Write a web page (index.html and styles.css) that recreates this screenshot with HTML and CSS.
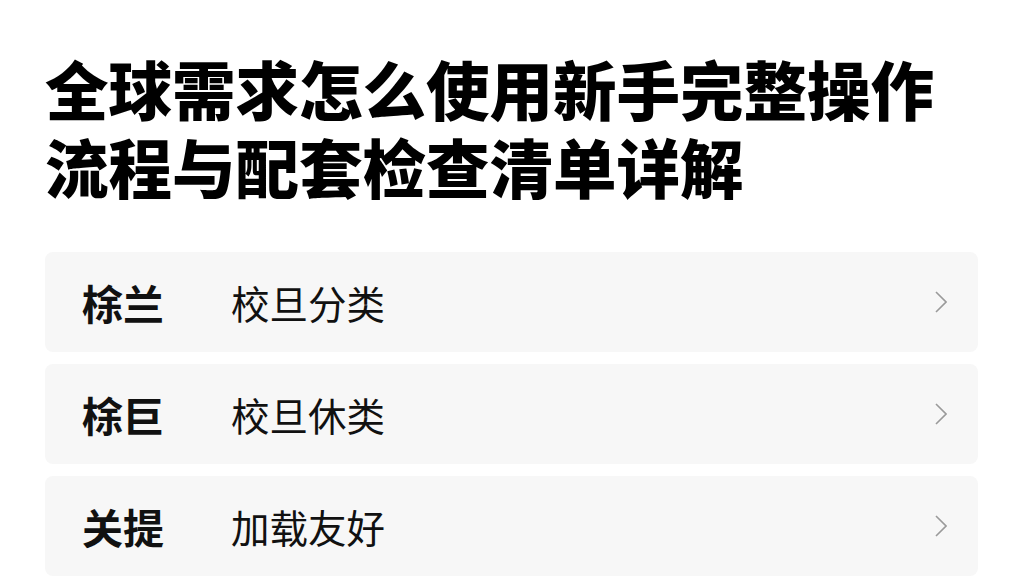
FILE: index.html
```html
<!DOCTYPE html>
<html lang="zh-CN">
<head>
<meta charset="utf-8">
<title>全球需求怎么使用新手完整操作流程与配套检查清单详解</title>
<link rel="stylesheet" href="styles.css">
</head>
<body>
<main class="page">
  <h1 class="title">全球需求怎么使用新手完整操作<br>流程与配套检查清单详解</h1>
  <ul class="list">
    <li class="row">
      <span class="label">梌兰</span>
      <span class="value">校旦分类</span>
      <svg class="chev" viewBox="0 0 12 22" width="12" height="22"><path d="M1 1 L11 11 L1 21" fill="none" stroke="#9a9a9a" stroke-width="1.6"/></svg>
    </li>
    <li class="row">
      <span class="label">梌巨</span>
      <span class="value">校旦休类</span>
      <svg class="chev" viewBox="0 0 12 22" width="12" height="22"><path d="M1 1 L11 11 L1 21" fill="none" stroke="#9a9a9a" stroke-width="1.6"/></svg>
    </li>
    <li class="row">
      <span class="label">关提</span>
      <span class="value">加载友好</span>
      <svg class="chev" viewBox="0 0 12 22" width="12" height="22"><path d="M1 1 L11 11 L1 21" fill="none" stroke="#9a9a9a" stroke-width="1.6"/></svg>
    </li>
  </ul>
</main>
</body>
</html>
```
FILE: styles.css
```css
* { box-sizing: border-box; }
html, body { margin: 0; padding: 0; background: #ffffff; }
body {
  font-family: "Noto Sans CJK SC", "Noto Sans", sans-serif;
  color: #111111;
  width: 1024px;
  height: 576px;
  overflow: hidden;
}
.page {
  padding: 48px 46px 0 45px;
}
.title {
  margin: 0;
  font-size: 63.5px;
  line-height: 78px;
  font-weight: 900;
  color: #000000;
  letter-spacing: 0;
}
.list {
  list-style: none;
  margin: 48px 0 0 0;
  padding: 0;
  display: flex;
  flex-direction: column;
  gap: 12px;
  width: 933px;
}
.row {
  height: 100px;
  background: #f7f7f7;
  border-radius: 8px;
  display: flex;
  align-items: center;
  padding: 0 31px 0 37px;
}
.label {
  font-size: 41px;
  font-weight: 700;
  width: 149px;
  flex: none;
  color: #111111;
}
.value {
  font-size: 38.5px;
  font-weight: 400;
  flex: 1;
  color: #111111;
}
.chev { flex: none; display: block; }
```
